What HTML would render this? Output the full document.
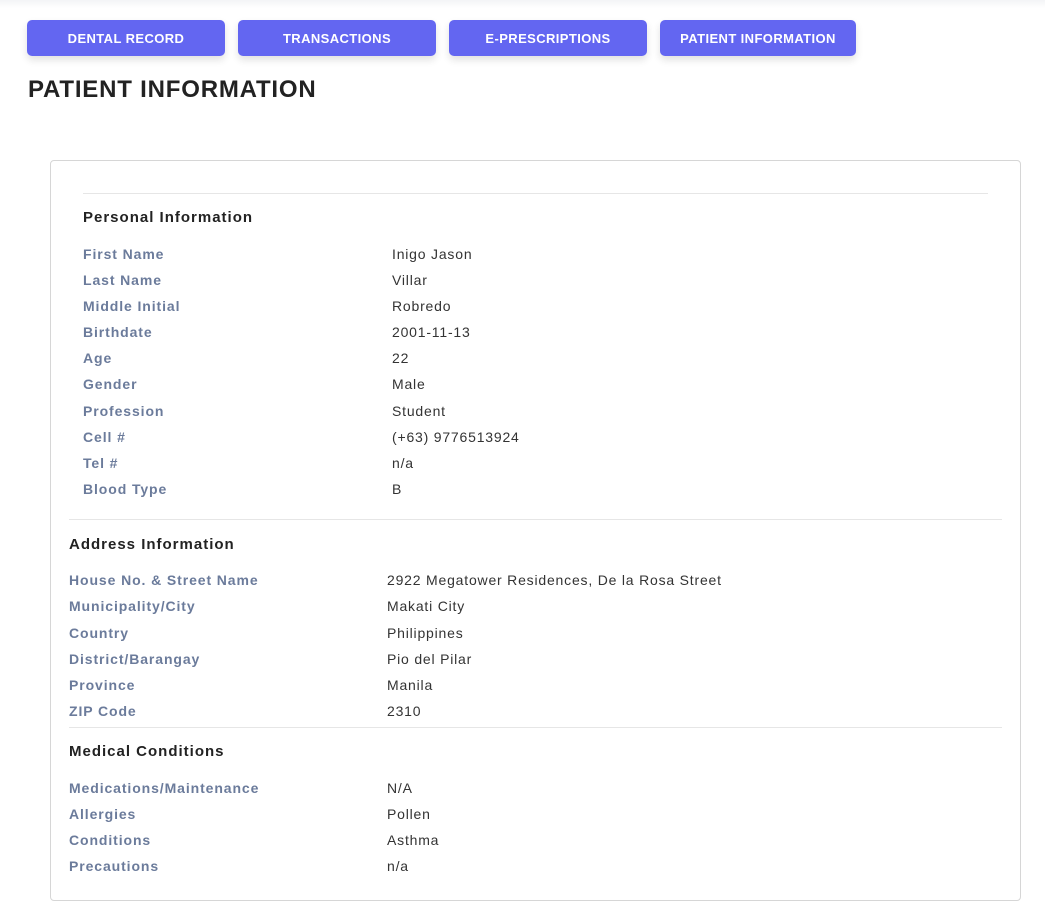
<!DOCTYPE html>
<html><head><meta charset="utf-8"><style>
*{margin:0;padding:0;box-sizing:border-box}
body{width:1045px;height:911px;background:#fff;font-family:"Liberation Sans",sans-serif;position:relative;overflow:hidden}
.top{position:absolute;left:0;top:0;width:1045px;height:8px;background:linear-gradient(#f3f4f6,#fff)}
.btn{position:absolute;top:20px;height:36px;background:#6366f1;color:#fff;border-radius:5px;font-weight:bold;font-size:13px;letter-spacing:.4px;display:flex;align-items:center;justify-content:center;box-shadow:0 4px 8px rgba(0,0,0,.12)}
h1{position:absolute;left:28px;top:76px;font-size:24px;font-weight:bold;color:#222;letter-spacing:.8px}
.card{position:absolute;left:50px;top:160px;width:971px;height:741px;border:1px solid #d6d6d6;border-radius:4px}
.hr{position:absolute;height:1px;background:#e6e6e6}
.h{position:absolute;font-size:15px;font-weight:bold;color:#222;letter-spacing:1px}
.l{position:absolute;font-size:14px;font-weight:bold;color:#6b7b9b;letter-spacing:.9px}
.v{position:absolute;font-size:14px;color:#333;letter-spacing:.8px}
</style></head><body>
<div class="top"></div>
<div class="btn" style="left:27px;width:198px">DENTAL RECORD</div>
<div class="btn" style="left:238px;width:198px">TRANSACTIONS</div>
<div class="btn" style="left:449px;width:198px">E-PRESCRIPTIONS</div>
<div class="btn" style="left:660px;width:196px">PATIENT INFORMATION</div>
<h1>PATIENT INFORMATION</h1>
<div class="card"></div>
<div class="hr" style="left:83px;top:193px;width:905px"></div>
<div class="h" style="left:83px;top:209px">Personal Information</div>
<div class="l" style="left:83px;top:246px">First Name</div><div class="v" style="left:392px;top:246px">Inigo Jason</div>
<div class="l" style="left:83px;top:272px">Last Name</div><div class="v" style="left:392px;top:272px">Villar</div>
<div class="l" style="left:83px;top:298px">Middle Initial</div><div class="v" style="left:392px;top:298px">Robredo</div>
<div class="l" style="left:83px;top:324px">Birthdate</div><div class="v" style="left:392px;top:324px">2001-11-13</div>
<div class="l" style="left:83px;top:350px">Age</div><div class="v" style="left:392px;top:350px">22</div>
<div class="l" style="left:83px;top:376px">Gender</div><div class="v" style="left:392px;top:376px">Male</div>
<div class="l" style="left:83px;top:403px">Profession</div><div class="v" style="left:392px;top:403px">Student</div>
<div class="l" style="left:83px;top:429px">Cell #</div><div class="v" style="left:392px;top:429px">(+63) 9776513924</div>
<div class="l" style="left:83px;top:455px">Tel #</div><div class="v" style="left:392px;top:455px">n/a</div>
<div class="l" style="left:83px;top:481px">Blood Type</div><div class="v" style="left:392px;top:481px">B</div>
<div class="hr" style="left:69px;top:519px;width:933px"></div>
<div class="h" style="left:69px;top:536px">Address Information</div>
<div class="l" style="left:69px;top:572px">House No. &amp; Street Name</div><div class="v" style="left:387px;top:572px">2922 Megatower Residences, De la Rosa Street</div>
<div class="l" style="left:69px;top:598px">Municipality/City</div><div class="v" style="left:387px;top:598px">Makati City</div>
<div class="l" style="left:69px;top:625px">Country</div><div class="v" style="left:387px;top:625px">Philippines</div>
<div class="l" style="left:69px;top:651px">District/Barangay</div><div class="v" style="left:387px;top:651px">Pio del Pilar</div>
<div class="l" style="left:69px;top:677px">Province</div><div class="v" style="left:387px;top:677px">Manila</div>
<div class="l" style="left:69px;top:703px">ZIP Code</div><div class="v" style="left:387px;top:703px">2310</div>
<div class="hr" style="left:69px;top:727px;width:933px"></div>
<div class="h" style="left:69px;top:743px">Medical Conditions</div>
<div class="l" style="left:69px;top:780px">Medications/Maintenance</div><div class="v" style="left:387px;top:780px">N/A</div>
<div class="l" style="left:69px;top:806px">Allergies</div><div class="v" style="left:387px;top:806px">Pollen</div>
<div class="l" style="left:69px;top:832px">Conditions</div><div class="v" style="left:387px;top:832px">Asthma</div>
<div class="l" style="left:69px;top:858px">Precautions</div><div class="v" style="left:387px;top:858px">n/a</div>
</body></html>
